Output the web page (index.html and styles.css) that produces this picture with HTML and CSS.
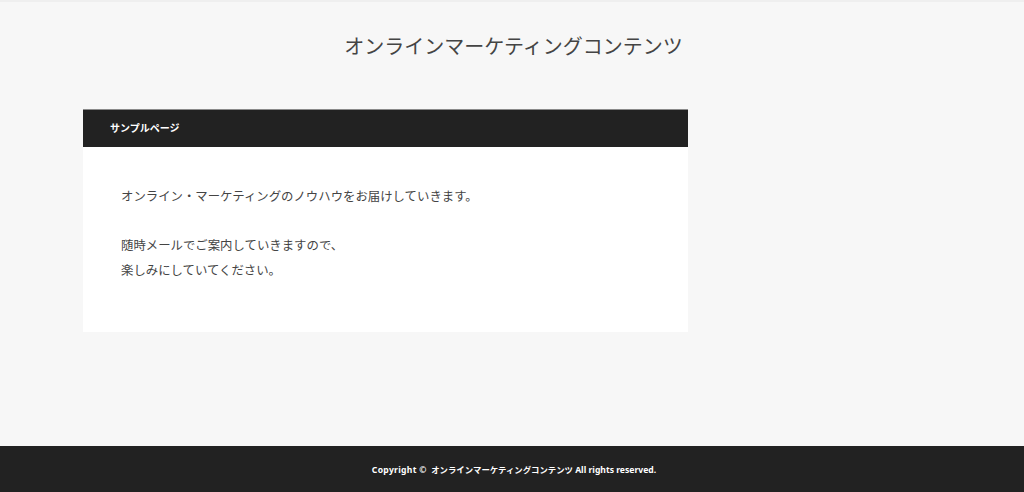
FILE: index.html
```html
<!DOCTYPE html>
<html lang="ja">
<head>
<meta charset="utf-8">
<title>オンラインマーケティングコンテンツ</title>
<link rel="stylesheet" href="styles.css">
</head>
<body>
<div class="page">
  <header class="site-header">
    <h1 class="site-title">オンラインマーケティングコンテンツ</h1>
  </header>
  <main class="container">
    <article class="card">
      <h2 class="card-title">サンプルページ</h2>
      <div class="card-body">
        <p>オンライン・マーケティングのノウハウをお届けしていきます。</p>
        <p>随時メールでご案内していきますので、<br>楽しみにしていてください。</p>
      </div>
    </article>
  </main>
  <footer class="site-footer">
    <p><span class="copy">Copyright ©</span>&nbsp; <span class="jp">オンラインマーケティングコンテンツ</span> All rights reserved.</p>
  </footer>
</div>
</body>
</html>
```
FILE: styles.css
```css
html, body {
  margin: 0;
  padding: 0;
}
body {
  background: #f7f7f7;
  font-family: "Noto Sans CJK JP", "Noto Sans", sans-serif;
  color: #444;
}
.page {
  display: flex;
  flex-direction: column;
  min-height: 492px;
  border-top: 2px solid #efefef;
  box-sizing: border-box;
}
.site-header {
  padding: 29px 0 0;
  height: 78px;
  box-sizing: border-box;
  text-align: center;
}
.site-title {
  margin: 0;
  font-size: 20px;
  line-height: 30px;
  font-weight: 400;
  color: #444;
  padding-left: 3px;
}
.container {
  flex: 1;
  width: 860px;
  margin: 29px auto 0;
  padding-left: 1px;
  box-sizing: border-box;
}
.card {
  width: 605px;
  background: #fff;
}
.card-title {
  margin: 0;
  height: 38px;
  box-sizing: border-box;
  background: #222;
  border-top: 1px solid #8a8a8a;
  color: #fff;
  font-size: 10px;
  line-height: 36px;
  font-weight: 700;
  padding-left: 27px;
}
.card-body {
  padding: 37px 38px 49px;
  font-size: 12.4px;
  line-height: 25px;
  color: #444;
}
.card-body p {
  margin: 0 0 24px;
}
.card-body p:last-child {
  margin-bottom: 0;
}
.site-footer {
  background: #222;
  height: 46px;
  display: flex;
  align-items: center;
  justify-content: center;
}
.site-footer p {
  margin: 0;
  color: #fff;
  font-family: "Noto Sans", "Noto Sans CJK JP", sans-serif;
  font-size: 8.6px;
  font-weight: 700;
  padding-left: 4px;
}
.site-footer .copy {
  letter-spacing: 0.3px;
}
.site-footer .jp {
  font-family: "Noto Sans CJK JP", sans-serif;
  font-size: 8.4px;
}
```
